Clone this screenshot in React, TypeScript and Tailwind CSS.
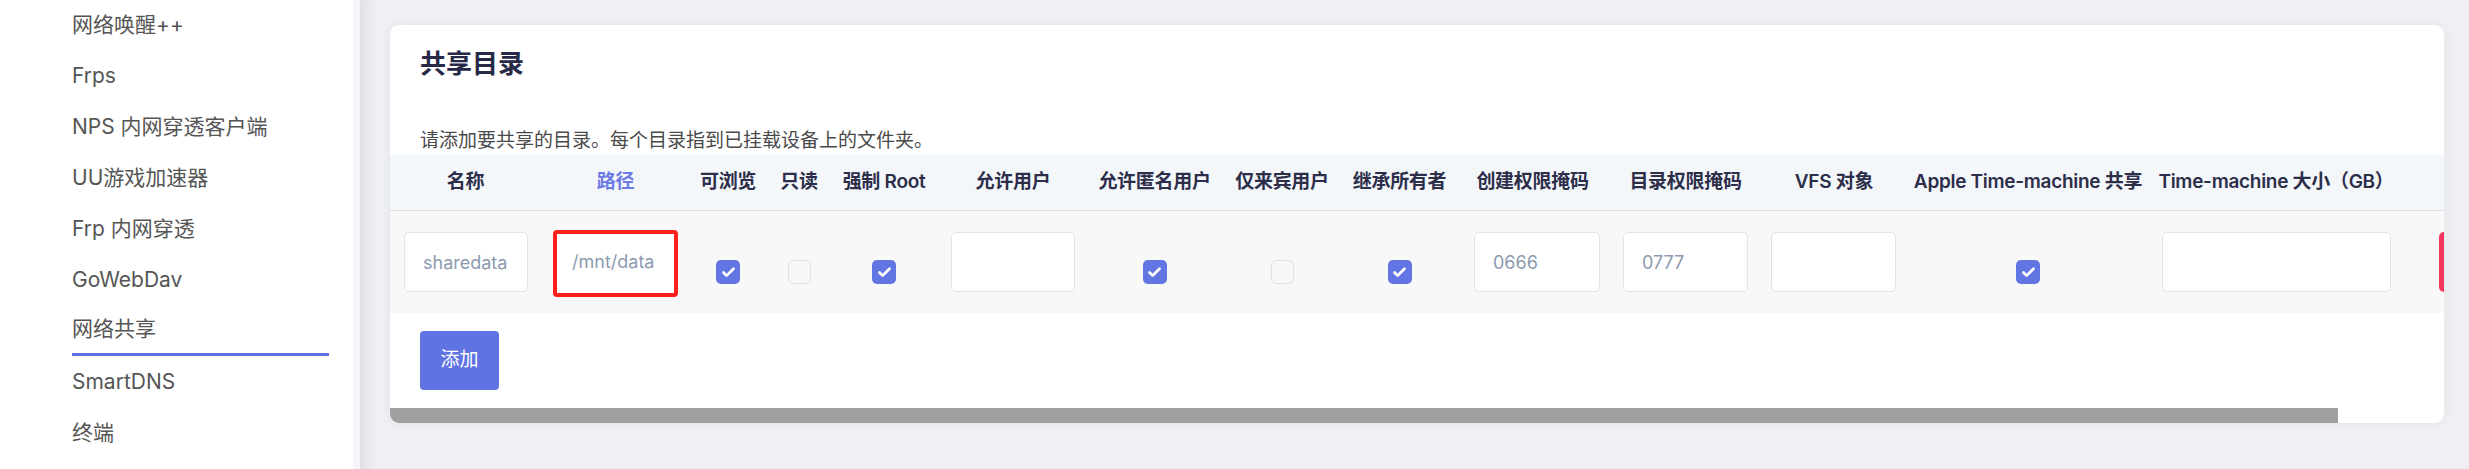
import { Check } from "lucide-react"

type Col = {
  label: string
  w: string
  kind: "input" | "check" | "del"
  pad?: string
  iw?: string
  value?: string
  checked?: boolean
  red?: boolean
  accent?: boolean
}

const menu = ["网络唤醒++", "Frps", "NPS 内网穿透客户端", "UU游戏加速器", "Frp 内网穿透", "GoWebDav", "网络共享", "SmartDNS", "终端"]

const cols: Col[] = [
  { label: "名称", w: "w-[151px]", kind: "input", pad: "pl-[14px]", iw: "w-[124px]", value: "sharedata" },
  { label: "路径", w: "w-[149px]", kind: "input", pad: "pl-[12px]", iw: "w-[125px]", value: "/mnt/data", red: true, accent: true },
  { label: "可浏览", w: "w-[76px]", kind: "check", checked: true },
  { label: "只读", w: "w-[66px]", kind: "check", checked: false },
  { label: "强制 Root", w: "w-[104px]", kind: "check", checked: true },
  { label: "允许用户", w: "w-[154px]", kind: "input", pad: "pl-[15px]", iw: "w-[124px]", value: "" },
  { label: "允许匿名用户", w: "w-[129px]", kind: "check", checked: true },
  { label: "仅来宾用户", w: "w-[126px]", kind: "check", checked: false },
  { label: "继承所有者", w: "w-[109px]", kind: "check", checked: true },
  { label: "创建权限掩码", w: "w-[157px]", kind: "input", pad: "pl-[20px]", iw: "w-[126px]", value: "0666" },
  { label: "目录权限掩码", w: "w-[149px]", kind: "input", pad: "pl-[12px]", iw: "w-[125px]", value: "0777" },
  { label: "VFS 对象", w: "w-[148px]", kind: "input", pad: "pl-[11px]", iw: "w-[125px]", value: "" },
  { label: "Apple Time-machine 共享", w: "w-[240px]", kind: "check", checked: true },
  { label: "Time-machine 大小（GB）", w: "w-[256px]", kind: "input", pad: "pl-[14px]", iw: "w-[229px]", value: "" },
  { label: "", w: "w-[120px]", kind: "del" },
]

function Box({ checked }: { checked?: boolean }) {
  return checked ? (
    <div className="w-[24px] h-[24px] rounded-[5px] bg-[#6175e3] flex items-center justify-center">
      <Check className="w-[15px] h-[15px] text-white" strokeWidth={4.5} />
    </div>
  ) : (
    <div className="w-[23px] h-[24px] rounded-[5px] border border-[#dfe2e8] bg-[#f8f8f8]" />
  )
}

function Cell({ c }: { c: Col }) {
  if (c.kind === "check") {
    return (
      <div className={`${c.w} flex-none flex justify-center pt-[28px]`}>
        <Box checked={c.checked} />
      </div>
    )
  }
  if (c.kind === "del") {
    return (
      <div className={`${c.w} flex-none pl-[35px]`}>
        <div className="w-[60px] h-[60px] rounded-[5px] bg-[#f5365c]" />
      </div>
    )
  }
  return (
    <div className={`${c.w} flex-none ${c.pad}`}>
      {c.red ? (
        <div className={`${c.iw} h-[67px] -mt-[2px] border-[4px] border-[#ff1f1a] rounded-[4px] bg-white flex items-start pt-[14px] pl-[15px] text-[18px] text-[#8c9ab0]`}>
          {c.value}
        </div>
      ) : (
        <div className={`${c.iw} h-[60px] border border-[#e0e3e9] rounded-[5px] bg-white flex items-center pl-[18px] text-[18px] text-[#8c9ab0]`}>
          {c.value}
        </div>
      )}
    </div>
  )
}

export default function App() {
  return (
    <div className="flex w-[2469px] h-[469px] overflow-hidden bg-[#eff0f3] font-['Inter','Noto_Sans_CJK_SC',sans-serif]">
      {/* sidebar */}
      <div className="w-[353px] flex-none bg-white flex flex-col -mt-[1px]">
        {menu.map((m) => (
          <div
            key={m}
            className={`ml-[72px] w-[257px] h-[51px] flex-none flex items-center text-[21px] text-[#555] ${m === "网络共享" ? "border-b-[3px] border-[#5f6fe0]" : ""}`}
          >
            {m}
          </div>
        ))}
      </div>
      <div className="w-[7px] flex-none bg-[#f5f7fa]" />

      {/* main */}
      <div className="flex-1 min-w-0 pt-[25px] shadow-[inset_14px_0_14px_-8px_rgba(0,0,0,0.07)]">
        <div className="ml-[30px] mr-[25px] h-[398px] bg-white rounded-[9px] overflow-hidden shadow-[0_0_14px_rgba(0,0,0,0.05)] flex flex-col">
          <div className="px-[30px] pt-[21px]">
            <h2 className="h-[36px] leading-[36px] text-[26px] font-bold text-[#272a46]">共享目录</h2>
            <p className="mt-[45px] h-[28px] leading-[28px] text-[19px] text-[#4a4a4a]">
              请添加要共享的目录。每个目录指到已挂载设备上的文件夹。
            </p>
          </div>

          <div className="flex h-[56px] flex-none bg-[#f4f7fa] border-b border-[#dfe1e5]">
            {cols.map((c, i) => (
              <div
                key={i}
                className={`${c.w} flex-none flex items-center justify-center whitespace-nowrap text-[19px] font-semibold tracking-[-0.3px] ${c.accent ? "text-[#6d7be4]" : "text-[#2c2e4a]"}`}
              >
                {c.label}
              </div>
            ))}
          </div>

          <div className="flex h-[102px] flex-none items-start pt-[21px] bg-[#f8f8f8]">
            {cols.map((c, i) => (
              <Cell key={i} c={c} />
            ))}
          </div>

          <div className="mt-[18px] ml-[30px] w-[79px] h-[59px] flex-none rounded-[4px] bg-[#5f74e2] text-white text-[19px] flex items-center justify-center">
            添加
          </div>

          <div className="mt-[18px] h-[15px] w-[1948px] flex-none bg-[#a0a0a0]" />
        </div>
      </div>
    </div>
  )
}
